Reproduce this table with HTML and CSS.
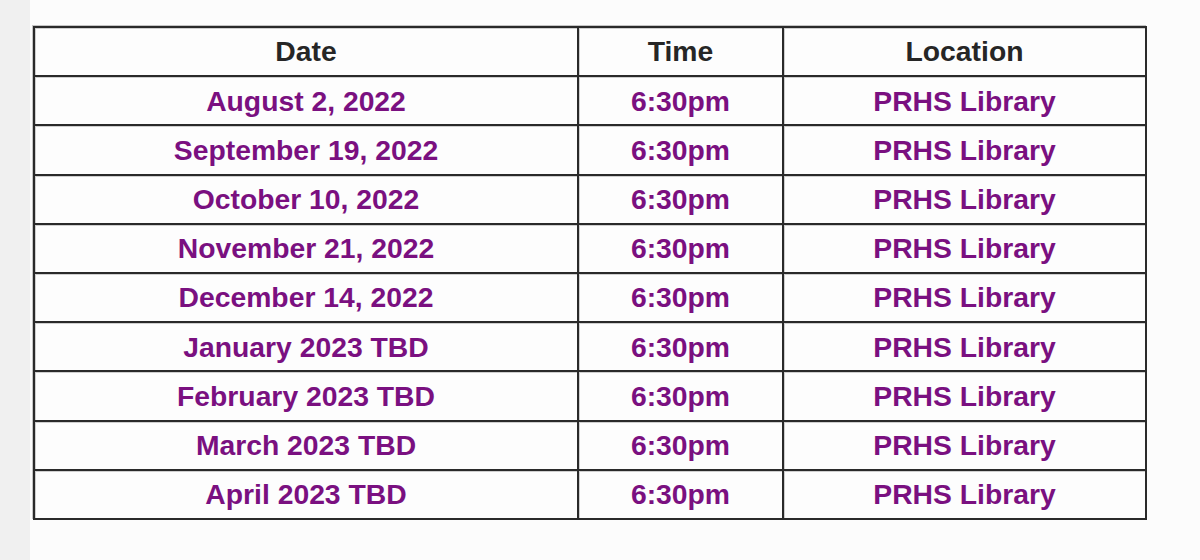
FILE: index.html
```html
<!DOCTYPE html>
<html>
<head>
<meta charset="utf-8">
<link rel="stylesheet" href="styles.css">
</head>
<body>
<div class="page">
  <table class="schedule">
    <thead>
      <tr>
        <th class="c-date">Date</th>
        <th class="c-time">Time</th>
        <th class="c-loc">Location</th>
      </tr>
    </thead>
    <tbody>
      <tr><td>August 2, 2022</td><td>6:30pm</td><td>PRHS Library</td></tr>
      <tr><td>September 19, 2022</td><td>6:30pm</td><td>PRHS Library</td></tr>
      <tr><td>October 10, 2022</td><td>6:30pm</td><td>PRHS Library</td></tr>
      <tr><td>November 21, 2022</td><td>6:30pm</td><td>PRHS Library</td></tr>
      <tr><td>December 14, 2022</td><td>6:30pm</td><td>PRHS Library</td></tr>
      <tr><td>January 2023 TBD</td><td>6:30pm</td><td>PRHS Library</td></tr>
      <tr><td>February 2023 TBD</td><td>6:30pm</td><td>PRHS Library</td></tr>
      <tr><td>March 2023 TBD</td><td>6:30pm</td><td>PRHS Library</td></tr>
      <tr><td>April 2023 TBD</td><td>6:30pm</td><td>PRHS Library</td></tr>
    </tbody>
  </table>
</div>
</body>
</html>
```

FILE: styles.css
```css
html, body {
  margin: 0;
  padding: 0;
}
body {
  width: 1200px;
  height: 560px;
  overflow: hidden;
  background: linear-gradient(to right, #f0f0f0 0, #f0f0f0 30px, #fcfcfc 30px);
  font-family: "Liberation Sans", Arial, Helvetica, sans-serif;
}
.page {
  padding: 26px 0 0 33px;
}
.schedule {
  border-collapse: separate;
  border-spacing: 0;
  table-layout: fixed;
  width: 1114px;
  border-top: 2px solid #2a2a2a;
  border-left: 2px solid #2a2a2a;
  box-shadow: -1px -1px 0 #c4c4c4;
  background: #fdfdfd;
}
.schedule th,
.schedule td {
  box-sizing: content-box;
  height: 47.2px;
  padding: 0;
  border-right: 2px solid #2a2a2a;
  border-bottom: 2px solid #2a2a2a;
  box-shadow: inset 1px 1px 0 #cfcfcf;
  text-align: center;
  vertical-align: middle;
  font-size: 28.3px;
  font-weight: bold;
  line-height: 1;
  white-space: nowrap;
}
.schedule th {
  color: #262626;
}
.schedule td {
  color: #7a1080;
}
.c-date { width: 542px; }
.c-time { width: 203px; }
.c-loc  { width: 361px; }
```
